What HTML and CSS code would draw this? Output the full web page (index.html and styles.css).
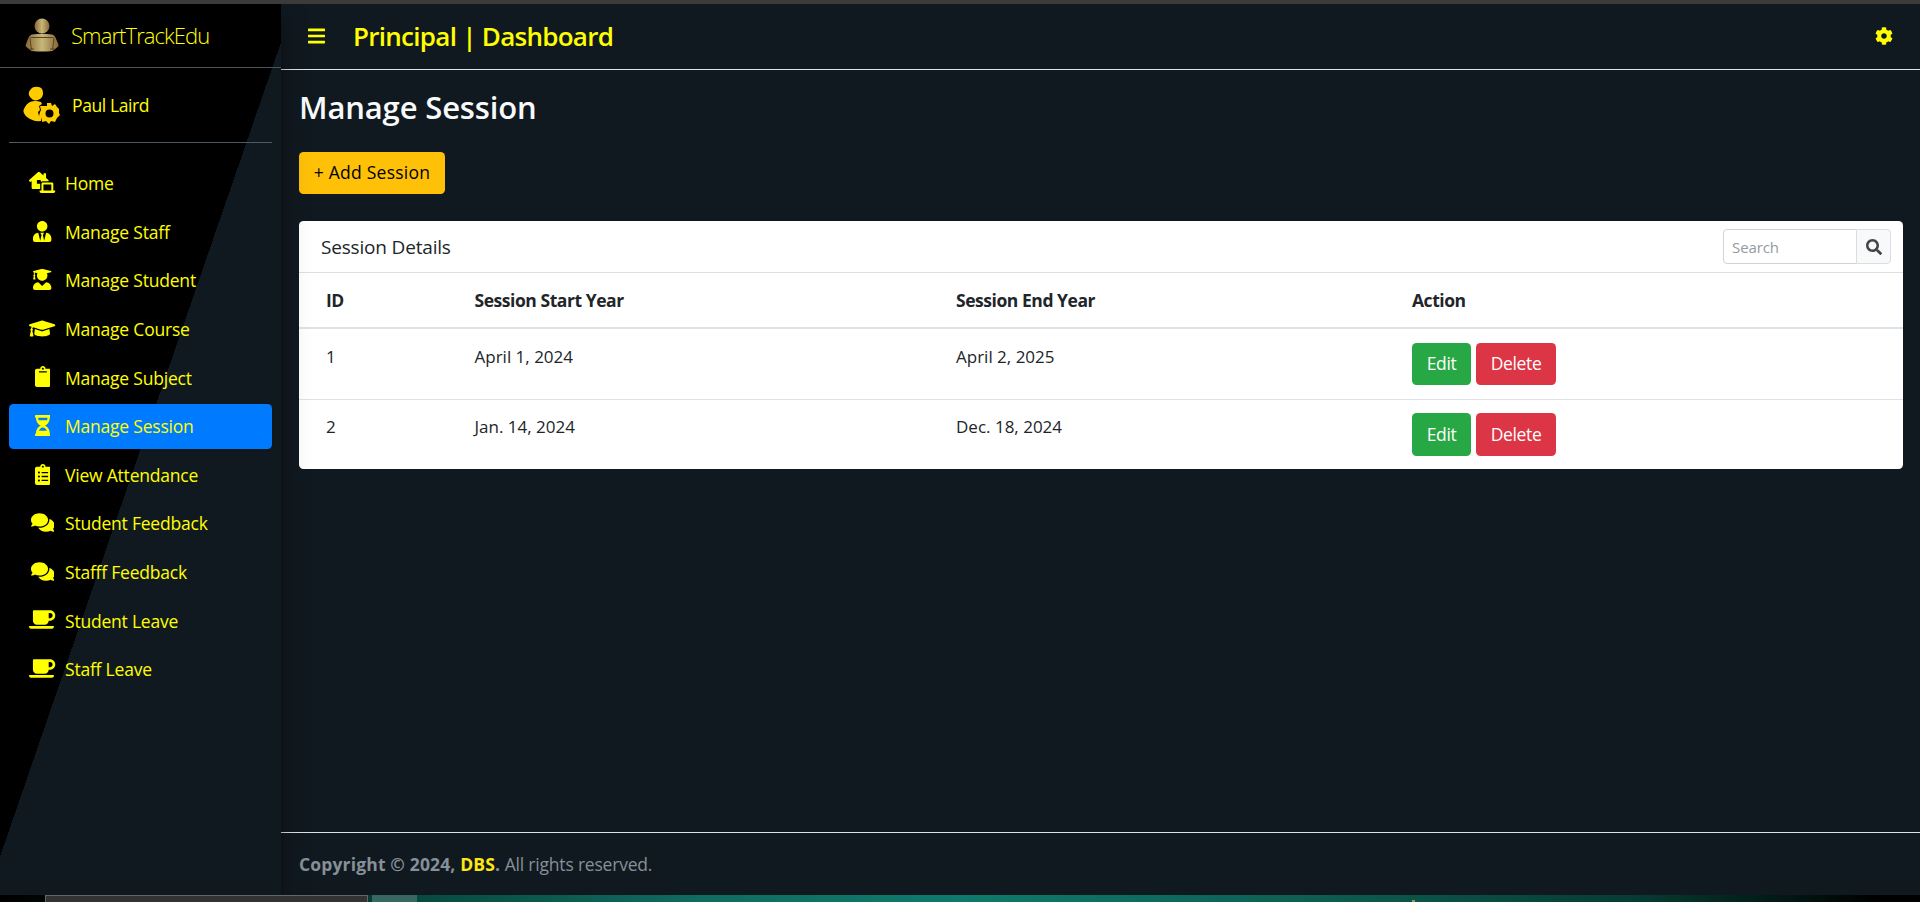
FILE: index.html
```
<!DOCTYPE html>
<html lang="en">
<head>
<meta charset="utf-8">
<title>Principal | Dashboard</title>
<link rel="stylesheet" href="styles.css">
</head>
<body>
<div class="window-edge"></div>
<div class="wrapper">
  <aside class="sidebar">
    <div class="brand">
      <svg class="brand-logo" viewBox="0 0 34 34"><defs><linearGradient id="gold"><stop offset="0" stop-color="#8a6436"/><stop offset=".5" stop-color="#c6b878"/><stop offset="1" stop-color="#8a6436"/></linearGradient></defs><circle cx="17" cy="8" r="7.500" fill="url(#gold)"/><path d="M7 16.500Q17 15 27 16.500Q30 17 31.500 22L33.500 26.500Q34 28.500 32 29.500L27.500 33Q17 34 6.500 33L2 29.500Q0 28.500.8 26.500L3 21Q4.500 17 7 16.500Z" fill="url(#gold)"/><path d="M6.500 32L5 20.500Q5 19.500 6.500 19.500H27.500Q29 19.500 29 20.500L27.500 32M4.500 31H9M25 31H29.500" fill="none" stroke="#584326" stroke-width="1"/></svg>
      <span class="brand-text">SmartTrackEdu</span>
    </div>
    <div class="user">
      <svg class="user-avatar" viewBox="0 0 37 38"><path fill="#fc0" d="M8 3C10 0 17 0 19 3C21 7 20 11 17 13C14 15 10 15 8 12C5 9 5 6 8 3ZM7 16Q12 14 18 16L19 18L16 20L17 24L15 26L16 30L19 31L18 35Q10 36 4 31Q-1 26 1 23Q3 18 7 16Z"/><path fill="#fc0" fill-rule="evenodd" d="M24 17L28 17L29 20L32 18L34 21L36 23L36 27L37 29L34 32L32 36L28 35L26 38L23 35L19 36L19 32L16 30L17 26L18 24L17 20L21 20L24 20ZM26.500 23.500A4 4 0 1 0 26.500 31.500A4 4 0 1 0 26.500 23.500Z"/></svg>
      <span class="user-name">Paul Laird</span>
    </div>
    <nav class="menu">
      <a class="item"><svg class="icon" viewBox="0 0 640 512"><path d="M272,288H208a16,16,0,0,1-16-16V208a16,16,0,0,1,16-16h64a16,16,0,0,1,16,16v37.120C299.110,232.240,315,224,332.800,224H469.740l6.650-7.530A16.510,16.510,0,0,0,480,207a16.310,16.310,0,0,0-4.750-10.610L416,144V48a16,16,0,0,0-16-16H368a16,16,0,0,0-16,16V87.300L263.500,8.920C258,4,247.450,0,240.050,0s-17.930,4-23.470,8.920L4.780,196.420A16.150,16.150,0,0,0,0,207a16.400,16.400,0,0,0,3.550,9.390L22.340,237.700A16.220,16.220,0,0,0,33,242.480,16.510,16.510,0,0,0,42.340,239L64,219.880V384a32,32,0,0,0,32,32H272ZM629.330,448H592V288c0-17.670-12.890-32-28.800-32H332.800c-15.910,0-28.800,14.330-28.800,32V448H266.670A10.670,10.670,0,0,0,256,458.670v10.660A42.820,42.820,0,0,0,298.600,512H597.400A42.820,42.820,0,0,0,640,469.330V458.670A10.670,10.670,0,0,0,629.330,448ZM544,448H352V304H544Z"/></svg><span class="label">Home</span></a>
      <a class="item"><svg class="icon" viewBox="0 0 448 512"><path d="M224 256c70.700 0 128-57.300 128-128S294.700 0 224 0 96 57.300 96 128s57.300 128 128 128zm95.800 32.600L272 480l-32-136 32-56h-96l32 56-32 136-47.800-191.400C56.900 292 0 350.300 0 422.400V464c0 26.500 21.500 48 48 48h352c26.500 0 48-21.500 48-48v-41.600c0-72.100-56.900-130.400-128.200-133.800z"/></svg><span class="label">Manage Staff</span></a>
      <a class="item"><svg class="icon" viewBox="0 0 448 512"><path d="M319.400 320.600L224 416l-95.400-95.400C57.100 323.700 0 382.200 0 454.400v9.600c0 26.500 21.500 48 48 48h352c26.500 0 48-21.500 48-48v-9.600c0-72.200-57.100-130.700-128.600-133.800zM13.600 79.800l6.400 1.500v58.400c-7 4.200-12 11.500-12 20.300 0 8.400 4.600 15.400 11.100 19.700L3.500 242c-1.700 6.900 2.100 14 7.600 14h41.800c5.500 0 9.300-7.100 7.600-14l-15.600-62.300C51.400 175.400 56 168.400 56 160c0-8.800-5-16.100-12-20.300V87.100l66 15.900c-8.600 17.200-14 36.400-14 57 0 70.700 57.300 128 128 128s128-57.300 128-128c0-20.600-5.300-39.800-14-57l96.300-23.200c18.200-4.400 18.200-27.100 0-31.500l-190.400-46c-13-3.100-26.700-3.100-39.700 0L13.600 48.200c-18.100 4.400-18.100 27.200 0 31.600z"/></svg><span class="label">Manage Student</span></a>
      <a class="item"><svg class="icon" viewBox="0 0 640 512"><path d="M622.300 153.200L343.400 67.500c-15.200-4.700-31.600-4.700-46.800 0L17.700 153.200c-23.600 7.300-23.600 38.300 0 45.600l48.600 14.900c-10.700 13.200-17.200 29.300-17.800 46.900C38.800 266.200 32 276.100 32 288c0 10.800 5.700 19.900 14 25.700l-25.500 114.800C18.300 438.500 25.800 448 36 448h56c10.300 0 17.800-9.500 15.600-19.500L82 313.700c8.300-5.800 14-14.900 14-25.700 0-11.600-6.500-21.200-15.700-26.900.8-15 8.400-28.200 20.700-36.700l195.500 60.100c9 2.800 26.700 6.600 46.800 0l278.900-85.700c23.700-7.300 23.700-38.300.1-45.600zM352.800 315.100c-28.500 8.800-52.900 3.900-65.700 0L142.100 270.500 128 384c0 35.300 86 64 192 64s192-28.700 192-64l-14.200-113.500z"/></svg><span class="label">Manage Course</span></a>
      <a class="item"><svg class="icon" viewBox="0 0 384 512"><path d="M384 112v352c0 26.500-21.500 48-48 48H48c-26.500 0-48-21.500-48-48V112c0-26.500 21.500-48 48-48h80c0-35.300 28.700-64 64-64s64 28.700 64 64h80c26.500 0 48 21.500 48 48zM192 40c-13.300 0-24 10.700-24 24s10.700 24 24 24 24-10.700 24-24-10.700-24-24-24m96 114v-20a6 6 0 0 0-6-6H102a6 6 0 0 0-6 6v20a6 6 0 0 0 6 6h180a6 6 0 0 0 6-6z"/></svg><span class="label">Manage Subject</span></a>
      <a class="item active"><svg class="icon" viewBox="0 0 384 512"><path d="M360 0H24C10.700 0 0 10.700 0 24v16c0 13.300 10.700 24 24 24 0 91 51 167.700 120.800 192C75 280.300 24 357 24 448c-13.300 0-24 10.700-24 24v16c0 13.300 10.700 24 24 24h336c13.300 0 24-10.700 24-24v-16c0-13.300-10.700-24-24-24 0-91-51-167.700-120.800-192C309 231.700 360 155 360 64c13.300 0 24-10.700 24-24V24c0-13.300-10.700-24-24-24zM288 384H96c16-48 54-80 96-80s80 32 96 80zM296 128H88c-6-20-8-42-8-64h224c0 22-3 44-8 64z"/></svg><span class="label">Manage Session</span></a>
      <a class="item"><svg class="icon" viewBox="0 0 384 512"><path d="M336 64h-80c0-35.300-28.700-64-64-64s-64 28.700-64 64H48C21.500 64 0 85.500 0 112v352c0 26.500 21.500 48 48 48h288c26.500 0 48-21.500 48-48V112c0-26.500-21.500-48-48-48zM96 424c-13.300 0-24-10.700-24-24s10.700-24 24-24 24 10.700 24 24-10.700 24-24 24zm0-96c-13.300 0-24-10.700-24-24s10.700-24 24-24 24 10.700 24 24-10.700 24-24 24zm0-96c-13.300 0-24-10.700-24-24s10.700-24 24-24 24 10.700 24 24-10.700 24-24 24zm96-192c13.300 0 24 10.700 24 24s-10.700 24-24 24-24-10.700-24-24 10.700-24 24-24zm128 368c0 4.400-3.600 8-8 8H168c-4.400 0-8-3.600-8-8v-16c0-4.400 3.600-8 8-8h144c4.400 0 8 3.600 8 8v16zm0-96c0 4.400-3.600 8-8 8H168c-4.400 0-8-3.600-8-8v-16c0-4.400 3.600-8 8-8h144c4.400 0 8 3.600 8 8v16zm0-96c0 4.400-3.600 8-8 8H168c-4.400 0-8-3.600-8-8v-16c0-4.400 3.600-8 8-8h144c4.400 0 8 3.600 8 8v16z"/></svg><span class="label">View Attendance</span></a>
      <a class="item"><svg class="icon" viewBox="0 0 576 512"><path d="M416 192c0-88.400-93.100-160-208-160S0 103.600 0 192c0 34.300 14.100 65.900 38 92-13.400 30.200-35.500 54.200-35.800 54.500-2.200 2.300-2.800 5.700-1.500 8.700S4.800 352 8 352c36.600 0 66.900-12.300 88.700-25 32.200 15.700 70.300 25 111.300 25 114.900 0 208-71.600 208-160zm122 220c23.900-26 38-57.700 38-92 0-66.900-53.500-124.200-129.300-148.100.9 6.600 1.300 13.300 1.300 20.100 0 105.900-107.700 192-240 192-10.800 0-21.300-.8-31.700-1.900C207.800 439.600 281.800 480 368 480c41 0 79.100-9.200 111.300-25 21.800 12.700 52.100 25 88.700 25 3.200 0 6.100-1.900 7.300-4.800 1.300-2.900.7-6.300-1.500-8.700-.3-.3-22.400-24.200-35.800-54.500z"/></svg><span class="label">Student Feedback</span></a>
      <a class="item"><svg class="icon" viewBox="0 0 576 512"><path d="M416 192c0-88.400-93.100-160-208-160S0 103.600 0 192c0 34.300 14.100 65.900 38 92-13.400 30.200-35.500 54.200-35.800 54.500-2.200 2.300-2.800 5.700-1.500 8.700S4.800 352 8 352c36.600 0 66.900-12.300 88.700-25 32.200 15.700 70.300 25 111.300 25 114.900 0 208-71.600 208-160zm122 220c23.900-26 38-57.700 38-92 0-66.900-53.500-124.200-129.300-148.100.9 6.600 1.300 13.300 1.300 20.100 0 105.900-107.700 192-240 192-10.800 0-21.300-.8-31.700-1.900C207.800 439.600 281.800 480 368 480c41 0 79.100-9.200 111.300-25 21.800 12.700 52.100 25 88.700 25 3.200 0 6.100-1.900 7.300-4.800 1.300-2.900.7-6.300-1.500-8.700-.3-.3-22.400-24.200-35.800-54.500z"/></svg><span class="label">Stafff Feedback</span></a>
      <a class="item"><svg class="icon" viewBox="0 0 640 512"><path d="M192 384h192c53 0 96-43 96-96h32c70.600 0 128-57.400 128-128S582.600 32 512 32H120c-13.300 0-24 10.700-24 24v232c0 53 43 96 96 96zM512 96c35.300 0 64 28.700 64 64s-28.700 64-64 64h-32V96h32zm47.700 384H48.300c-47.600 0-61-64-36-64h583.300c25 0 11.800 64-35.900 64z"/></svg><span class="label">Student Leave</span></a>
      <a class="item"><svg class="icon" viewBox="0 0 640 512"><path d="M192 384h192c53 0 96-43 96-96h32c70.600 0 128-57.400 128-128S582.600 32 512 32H120c-13.300 0-24 10.700-24 24v232c0 53 43 96 96 96zM512 96c35.300 0 64 28.700 64 64s-28.700 64-64 64h-32V96h32zm47.700 384H48.300c-47.600 0-61-64-36-64h583.300c25 0 11.800 64-35.900 64z"/></svg><span class="label">Staff Leave</span></a>
    </nav>
  </aside>
  <main class="main">
    <header class="topbar">
      <svg class="bars" viewBox="0 0 448 512"><path d="M16 132h416c8.800 0 16-7.200 16-16V76c0-8.800-7.200-16-16-16H16C7.200 60 0 67.200 0 76v40c0 8.800 7.200 16 16 16zm0 160h416c8.800 0 16-7.200 16-16v-40c0-8.800-7.200-16-16-16H16c-8.800 0-16 7.200-16 16v40c0 8.800 7.200 16 16 16zm0 160h416c8.800 0 16-7.200 16-16v-40c0-8.800-7.200-16-16-16H16c-8.800 0-16 7.200-16 16v40c0 8.800 7.200 16 16 16z"/></svg>
      <span class="topbar-title">Principal | Dashboard</span>
      <svg class="gear" viewBox="0 0 512 512"><path d="M487.400 315.700l-42.600-24.600c4.300-23.200 4.300-47 0-70.200l42.600-24.600c4.900-2.800 7.100-8.600 5.500-14-11.100-35.600-30-67.800-54.700-94.600-3.800-4.100-10-5.100-14.800-2.300L380.800 110c-17.900-15.400-38.500-27.300-60.800-35.100V25.800c0-5.600-3.900-10.500-9.400-11.700-36.700-8.200-74.300-7.800-109.200 0-5.500 1.200-9.400 6.100-9.400 11.700V75c-22.200 7.900-42.800 19.800-60.800 35.100L88.700 85.500c-4.900-2.800-11-1.900-14.800 2.300-24.700 26.700-43.600 58.900-54.700 94.600-1.700 5.400.6 11.200 5.500 14L67.300 221c-4.300 23.200-4.300 47 0 70.200l-42.600 24.600c-4.900 2.800-7.100 8.600-5.500 14 11.100 35.600 30 67.800 54.700 94.600 3.800 4.100 10 5.100 14.800 2.300l42.600-24.600c17.900 15.400 38.500 27.300 60.800 35.100v49.200c0 5.600 3.900 10.500 9.400 11.700 36.700 8.200 74.300 7.800 109.200 0 5.500-1.200 9.400-6.100 9.400-11.700v-49.200c22.200-7.900 42.800-19.800 60.800-35.100l42.600 24.600c4.900 2.800 11 1.900 14.800-2.300 24.700-26.700 43.600-58.900 54.700-94.600 1.500-5.500-.7-11.300-5.600-14.100zM256 336c-44.100 0-80-35.900-80-80s35.900-80 80-80 80 35.900 80 80-35.900 80-80 80z"/></svg>
    </header>
    <section class="content">
      <h1 class="page-title">Manage Session</h1>
      <a class="add-button">+ Add Session</a>
      <div class="card">
        <div class="card-header">
          <span class="card-title">Session Details</span>
          <div class="search">
            <input class="search-input" type="text" placeholder="Search">
            <button class="search-button"><svg class="search-icon" viewBox="0 0 512 512"><path d="M505 442.700L405.300 343c-4.500-4.500-10.600-7-17-7H372c27.600-35.300 44-79.700 44-128C416 93.100 322.900 0 208 0S0 93.100 0 208s93.100 208 208 208c48.300 0 92.700-16.400 128-44v16.300c0 6.400 2.500 12.500 7 17l99.700 99.700c9.400 9.400 24.600 9.400 33.900 0l28.300-28.300c9.400-9.400 9.400-24.600.1-34zM208 336c-70.700 0-128-57.200-128-128 0-70.700 57.200-128 128-128 70.700 0 128 57.200 128 128 0 70.700-57.200 128-128 128z"/></svg></button>
          </div>
        </div>
        <div class="row head"><span>ID</span><span>Session Start Year</span><span>Session End Year</span><span>Action</span></div>
        <div class="row"><span>1</span><span>April 1, 2024</span><span>April 2, 2025</span><span class="actions"><a class="btn edit">Edit</a><a class="btn delete">Delete</a></span></div>
        <div class="row"><span>2</span><span>Jan. 14, 2024</span><span>Dec. 18, 2024</span><span class="actions"><a class="btn edit">Edit</a><a class="btn delete">Delete</a></span></div>
      </div>
    </section>
    <footer class="footer"><strong>Copyright © 2024, <span class="company">DBS</span>.</strong> <span class="rights">All rights reserved.</span></footer>
  </main>
</div>
<div class="taskbar"><span class="task-search"></span><span class="task-active"></span><span class="task-badge"></span></div>
</body>
</html>
```
FILE: styles.css
```
* { box-sizing: border-box; }

body {
  margin: 0;
  height: 902px;
  overflow: hidden;
  display: flex;
  flex-direction: column;
  background: #111920;
  color: #212529;
  font: 17.500px/27px "Open Sans", "Noto Sans", sans-serif;
}

.window-edge { height: 4px; background: #3b3b3b; }
.wrapper { flex: 1; min-height: 0; display: flex; }

.sidebar {
  width: 281px;
  z-index: 1;
  background: linear-gradient(109.040deg, #000 50%, #111920 50%);
  box-shadow: 0 14px 28px rgba(0, 0, 0, .25), 0 10px 10px rgba(0, 0, 0, .22);
  clip-path: inset(0 -50px 0 0);
  color: #ff0;
  white-space: nowrap;
}

.brand {
  height: 64px;
  display: flex;
  align-items: center;
  padding: 0 0 2px 25px;
  border-bottom: 1px solid #4b545c;
}
.brand-logo { width: 34px; height: 34px; margin-right: 12px; }
.brand-text { padding-top: 2px; font-size: 22px; font-weight: 300; letter-spacing: -.9px; }

.user {
  height: 75px;
  margin: 0 9px 18px;
  padding: 0 0 1px 14px;
  display: flex;
  align-items: center;
  border-bottom: 1px solid #4f5962;
}
.user-avatar { width: 37px; height: 38px; margin-right: 12px; }
.user-name { padding-top: 2px; letter-spacing: -.4px; }

.menu { padding: 0 9px; display: flex; flex-direction: column; gap: 3.600px; }
.item {
  height: 45px;
  display: grid;
  grid-template-columns: 39px 1fr;
  column-gap: 3px;
  align-items: center;
  padding-left: 14px;
  border-radius: 4.500px;
}
.item.active { background: #007bff; box-shadow: 0 1px 3px rgba(0, 0, 0, .2); }
.icon { height: 21px; margin-bottom: 2px; justify-self: center; fill: #ff0; }
.label { padding-top: .6px; letter-spacing: -.21px; }

.main { flex: 1; display: flex; flex-direction: column; }

.topbar {
  height: 66px;
  display: flex;
  align-items: center;
  padding: 0 27px 1px 27px;
  border-bottom: 1px solid #dee2e6;
  color: #ff0;
}
.bars { height: 20px; width: 17px; fill: #ff0; }
.topbar-title { margin-left: 28px; font-size: 26px; font-weight: 600; letter-spacing: -.72px; }
.gear { width: 18px; height: 18px; margin-left: auto; fill: #ff0; }

.content { flex: 1; padding: 18px 17px 0 18px; }
.page-title { margin: 0 0 25px; font-size: 31px; line-height: 39px; font-weight: 600; letter-spacing: -.15px; color: #f8f9fa; }
.add-button {
  display: inline-flex;
  align-items: center;
  justify-content: center;
  width: 146px;
  height: 42px;
  padding-bottom: 1px;
  border-radius: 4.500px;
  background: #ffc107;
  color: #000;
  letter-spacing: .25px;
}

.card { margin-top: 27px; height: 248px; background: #fff; border-radius: 4.500px; }
.card-header {
  height: 52px;
  display: flex;
  align-items: center;
  justify-content: space-between;
  padding: 0 12px 0 22px;
  border-bottom: 1px solid #dfdfdf;
}
.card-title { padding-top: 1px; font-size: 19px; letter-spacing: -.18px; }

.search { display: flex; height: 35px; }
.search-input {
  width: 134px;
  padding: 0 8px;
  border: 1px solid #ced4da;
  border-radius: 4px 0 0 4px;
  font: 15px "Open Sans", sans-serif;
  letter-spacing: -.1px;
}
.search-input::placeholder { color: #939ba2; }
.search-button {
  width: 35px;
  margin-left: -1px;
  padding: 0;
  display: grid;
  place-items: center;
  border: 1px solid #ddd;
  border-radius: 0 4px 4px 0;
  background: #f8f9fa;
}
.search-icon { width: 16px; height: 16px; fill: #444; }

.row {
  height: 70px;
  display: grid;
  grid-template-columns: 148.500px 481.500px 456px 1fr;
  padding: 14px 0 0 27px;
  font-size: 17px;
  letter-spacing: 0;
}
.row.head { height: 56px; font-size: 17.500px; font-weight: 700; letter-spacing: -.45px; border-bottom: 2px solid #dee2e6; }
.row + .row:last-child { padding-top: 13px; border-top: 1px solid #dee2e6; }
.actions { display: flex; gap: 5px; }
.btn {
  height: 42px;
  padding-bottom: 1px;
  display: grid;
  place-items: center;
  border-radius: 4.500px;
  color: #fff;
  font-size: 17.500px;
  letter-spacing: -.35px;
}
.row:last-child .btn { height: 43px; }
.edit { width: 59px; background: #28a745; }
.delete { width: 80px; background: #dc3545; }

.footer {
  height: 63px;
  padding: 18px 18px 0;
  border-top: 1px solid #dee2e6;
  color: #869099;
}
.footer strong { font-weight: 700; letter-spacing: .15px; }
.footer .company { color: #ffe812; }
.rights { letter-spacing: -.2px; }

.taskbar {
  height: 7px;
  display: flex;
  padding-left: 45px;
  background: linear-gradient(90deg, #000 0, #05291f 300px, #064a3f 415px, #106b60 700px, #0e7a6b 960px, #0d5f53 1300px, #063b31 1640px, #000 1880px);
}
.task-search { width: 323px; background: #333; border: 1px solid #666; border-bottom: 0; }
.task-active { width: 45px; margin-left: 4px; background: #36685f; }
.task-badge { width: 3px; height: 2px; margin: 5px 0 0 995px; background: #a99445; }
```
